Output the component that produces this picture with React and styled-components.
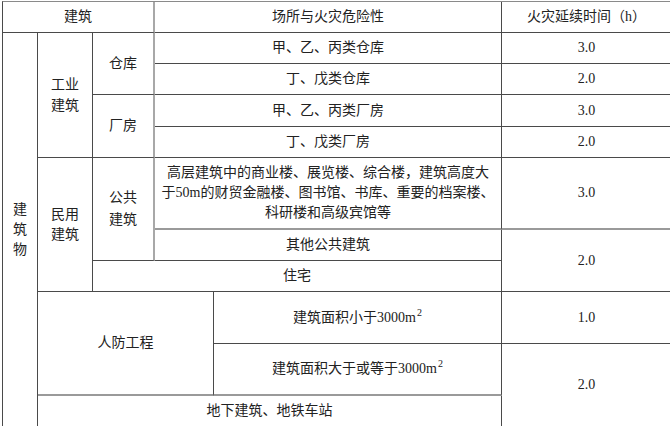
import React from 'react'
import styled, { createGlobalStyle } from 'styled-components'

const GlobalStyle = createGlobalStyle`
  html, body {
    margin: 0;
    padding: 0;
    background: #fff;
    overflow: hidden;
  }
  body {
    font-family: "Liberation Serif", "Noto Sans CJK SC", serif;
    color: #222;
  }
`

const line = '#4a4a4a'

const Table = styled.div`
  display: grid;
  grid-template-columns: 35px 55px 62px 59px 288px 170px;
  grid-template-rows: 31px 31px 31px 32px 31px 72px 31px 31px 52px 52px 31px;
  margin: 1px 0 0 2px;
  width: max-content;
  border-top: 1px solid #8a8a8a;
  border-left: 1px solid ${line};
  font-size: 14px;
`

const Cell = styled.div`
  grid-column: ${p => p.$col};
  grid-row: ${p => p.$row};
  box-sizing: border-box;
  display: flex;
  align-items: center;
  justify-content: center;
  text-align: center;
  line-height: ${p => p.$lh || 20}px;
  border-right: ${p => p.$soft ? '2px solid #a8a8a8' : `1px solid ${line}`};
  border-bottom: ${p => p.$greyBottom ? '2px solid #9a9a9a' : `1px solid ${line}`};
  white-space: nowrap;
`

const Sup = styled.sup`
  font-size: 10px;
  line-height: 0;
  position: relative;
  top: -5px;
  margin-left: 1px;
  vertical-align: baseline;
`

export default function App() {
  return (
    <>
      <GlobalStyle />
      <Table>
        <Cell $col="1 / span 3" $row="1" $soft>建筑</Cell>
        <Cell $col="4 / span 2" $row="1">场所与火灾危险性</Cell>
        <Cell $col="6" $row="1">火灾延续时间（h）</Cell>

        <Cell $col="1" $row="2 / span 10">建<br />筑<br />物</Cell>

        <Cell $col="2" $row="2 / span 4" $lh={21}>工业<br />建筑</Cell>
        <Cell $col="3" $row="2 / span 2" $soft>仓库</Cell>
        <Cell $col="4 / span 2" $row="2">甲、乙、丙类仓库</Cell>
        <Cell $col="6" $row="2">3.0</Cell>
        <Cell $col="4 / span 2" $row="3">丁、戊类仓库</Cell>
        <Cell $col="6" $row="3">2.0</Cell>
        <Cell $col="3" $row="4 / span 2" $soft>厂房</Cell>
        <Cell $col="4 / span 2" $row="4">甲、乙、丙类厂房</Cell>
        <Cell $col="6" $row="4">3.0</Cell>
        <Cell $col="4 / span 2" $row="5">丁、戊类厂房</Cell>
        <Cell $col="6" $row="5">2.0</Cell>

        <Cell $col="2" $row="6 / span 3">民用<br />建筑</Cell>
        <Cell $col="3" $row="6 / span 2" $soft $lh={22}>公共<br />建筑</Cell>
        <Cell $col="4 / span 2" $row="6" $greyBottom>
          高层建筑中的商业楼、展览楼、综合楼，建筑高度大<br />
          于50m的财贸金融楼、图书馆、书库、重要的档案楼、<br />
          科研楼和高级宾馆等
        </Cell>
        <Cell $col="6" $row="6" $greyBottom>3.0</Cell>
        <Cell $col="4 / span 2" $row="7">其他公共建筑</Cell>
        <Cell $col="6" $row="7 / span 2">2.0</Cell>
        <Cell $col="3 / span 3" $row="8">住宅</Cell>

        <Cell $col="2 / span 3" $row="9 / span 2" $greyBottom>人防工程</Cell>
        <Cell $col="5" $row="9">建筑面积小于3000m<Sup>2</Sup></Cell>
        <Cell $col="6" $row="9">1.0</Cell>
        <Cell $col="5" $row="10" $greyBottom>建筑面积大于或等于3000m<Sup>2</Sup></Cell>
        <Cell $col="6" $row="10 / span 2">2.0</Cell>
        <Cell $col="2 / span 4" $row="11">地下建筑、地铁车站</Cell>
      </Table>
    </>
  )
}
